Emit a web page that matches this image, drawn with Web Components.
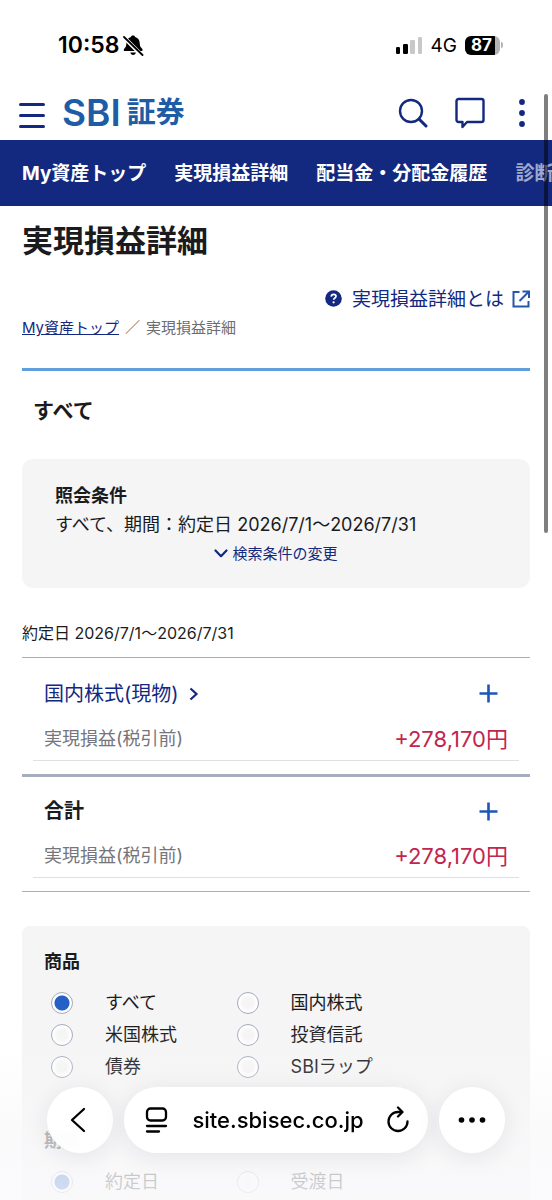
<!DOCTYPE html>
<html lang="ja">
<head>
<meta charset="utf-8">
<meta name="viewport" content="width=device-width, initial-scale=1">
<title>実現損益詳細</title>
<style>
  body {
    margin: 0;
    background: #fff;
    color: #1b1b1e;
    font-family: Inter, "Noto Sans CJK JP", sans-serif;
    --navy: #13297f;
    --rule: #a6adbf;
  }
</style>
</head>
<body>
<phone-screen>
  <status-bar slot="top"></status-bar>
  <site-header slot="top"></site-header>
  <site-nav slot="top"></site-nav>
  <page-intro></page-intro>
  <section-title>すべて</section-title>
  <condition-card>
    <span slot="title">照会条件</span>
    すべて、期間：約定日 2026/7/1〜2026/7/31
  </condition-card>
  <profit-list>
    <span slot="period">約定日 2026/7/1〜2026/7/31</span>
    <profit-row name="国内株式(現物)" amount="+278,170円" href="#stocks"></profit-row>
    <profit-row name="合計" amount="+278,170円" total></profit-row>
  </profit-list>
  <filter-card>
    <radio-set legend="商品" name="product" options="すべて,国内株式,米国株式,投資信託,債券,SBIラップ"></radio-set>
    <radio-set legend="期間" name="period" options="約定日,受渡日"></radio-set>
  </filter-card>
  <browser-bar slot="bottom"></browser-bar>
</phone-screen>

<script>
const define = (name, html, setup) => {
  const template = document.createElement('template');
  template.innerHTML = html;
  customElements.define(name, class extends HTMLElement {
    constructor() {
      super();
      this.attachShadow({ mode: 'open' }).append(template.content.cloneNode(true));
    }
    connectedCallback() {
      if (setup && !this.ready) { this.ready = true; setup(this, this.shadowRoot); }
    }
  });
};

define('phone-screen', `
  <style>
    :host { display: flex; flex-direction: column; height: 100vh; position: relative; overflow: hidden; }
    main { flex: 1; min-height: 0; overflow-y: auto; scrollbar-width: none; padding: 0 22px; }
    .fade { position: absolute; inset: auto 0 0; height: 180px; pointer-events: none;
      background: linear-gradient(rgba(249,249,251,0), rgba(248,248,250,.15) 28%, rgba(248,248,250,.7) 60%, rgba(250,250,252,.82)); }
    .thumb { position: absolute; right: 4px; top: 94px; width: 4px; height: 439px; border-radius: 2px; background: rgba(0,0,0,.5); }
    .bottom { position: absolute; inset: auto 0 47px; }
  </style>
  <slot name="top"></slot>
  <main><slot></slot></main>
  <div class="fade"></div>
  <div class="thumb"></div>
  <div class="bottom"><slot name="bottom"></slot></div>`);

define('status-bar', `
  <style>
    :host { display: flex; align-items: center; justify-content: space-between; height: 90px; padding: 0 49px 0 58px; color: #000; }
    div { display: flex; align-items: center; }
    .time { font-size: 23px; font-weight: 600; gap: 4px; }
    .net { font-size: 19px; gap: 8px; }
    svg { display: block; }
    .battery { display: flex; align-items: center; }
    .level { width: 35px; height: 19px; border-radius: 6px; font-size: 17px; font-weight: 700; line-height: 19px; color: #fff;
      justify-content: center; background: linear-gradient(90deg, #000 30px, #b4b4b4 30px); }
    .level span { padding-right: 2px; }
    .tip { width: 2px; height: 6px; margin-left: 1px; border-radius: 0 2px 2px 0; background: #b4b4b4; }
  </style>
  <div class="time"><span>10:58</span>
    <svg width="21" height="21" viewBox="0 0 21 21" aria-hidden="true">
      <path d="M10 .5c1.200 0 2 .7 2.200 1.600 3 .9 4.400 3.100 4.500 5.900.1 2.900.7 4 2 5.200.7.700.9 1.100.9 1.800 0 .7-.5 1.100-1.200 1.100H1.900c-.7 0-1.200-.4-1.200-1.100 0-.7.300-1.100.9-1.800C2.900 12 3.300 10.900 3.400 8c.1-2.800 1.500-5 4.400-5.900C8 1.200 8.800.5 10 .5zM7.300 17.500h5.600c-.3 1.500-1.300 2.500-2.800 2.500S7.600 19 7.300 17.500z"/>
      <path d="M.5 2 19 20.500" stroke="#fff" stroke-width="4"/>
      <path d="M1 2 19.500 20" stroke="#000" stroke-width="1.800" stroke-linecap="round"/>
    </svg>
  </div>
  <div class="net">
    <svg width="28" height="18" viewBox="0 0 28 18" aria-hidden="true">
      <rect x="1" y="11" width="4" height="7" rx="1.300"/><rect x="8" y="8" width="5" height="10" rx="1.300"/>
      <rect x="15" y="4" width="5" height="14" rx="1.300" fill="#c8c8c8"/><rect x="23" y="1" width="4" height="17" rx="1.300" fill="#c8c8c8"/>
    </svg>
    <span>4G</span>
    <div class="battery"><div class="level"><span>87</span></div><div class="tip"></div></div>
  </div>`);

define('site-header', `
  <style>
    :host { display: flex; align-items: center; height: 50px; padding: 0 26px 0 18px; color: var(--navy); }
    button { border: 0; padding: 0; background: none; color: inherit; display: flex; }
    .logo { display: flex; align-items: center; flex: 1; margin-left: 16px; gap: 6px; padding-bottom: 4px; color: #1f5ca6; text-decoration: none; line-height: 44px; }
    .latin { font-size: 37px; font-weight: 600; }
    .kanji { font-size: 29px; font-weight: 700; }
    nav { display: flex; align-items: center; gap: 27px; padding-bottom: 4px; }
  </style>
  <button aria-label="メニュー"><svg width="28" height="28" viewBox="0 0 28 28" fill="none" stroke="currentColor" stroke-width="3" stroke-linecap="round"><path d="M2.500 3.500h23M2.500 14.500h23M2.500 25.500h23"/></svg></button>
  <a class="logo" href="#top"><span class="latin">SBI</span><span class="kanji">証券</span></a>
  <nav>
    <button aria-label="検索"><svg width="30" height="30" viewBox="0 0 30 30" fill="none" stroke="currentColor" stroke-width="2.400" stroke-linecap="round"><circle cx="13" cy="13" r="11"/><path d="M21 21l7 7" stroke-width="3"/></svg></button>
    <button aria-label="メッセージ"><svg width="30" height="32" viewBox="0 0 30 32" fill="none" stroke="currentColor" stroke-width="2.400" stroke-linejoin="round"><path d="M3.500 2h23a2 2 0 0 1 2 2v19a2 2 0 0 1-2 2H12L7.500 30V25h-4a2 2 0 0 1-2-2V4a2 2 0 0 1 2-2z"/></svg></button>
    <button aria-label="その他"><svg width="14" height="28" viewBox="0 0 14 28" fill="currentColor"><circle cx="10" cy="3" r="2.900"/><circle cx="10" cy="14" r="2.900"/><circle cx="10" cy="25" r="2.900"/></svg></button>
  </nav>`);

define('site-nav', `
  <style>
    :host { display: block; background: var(--navy); overflow: hidden; }
    nav { display: flex; gap: 28px; padding: 2px 22px 0; line-height: 64px; font-size: 19px; font-weight: 700; white-space: nowrap; }
    a { color: #fff; text-decoration: none; }
    .next { opacity: .6; }
  </style>
  <nav><a href="#top">My資産トップ</a><a href="#realized">実現損益詳細</a><a href="#dividend">配当金・分配金履歴</a><a class="next" href="#check">診断</a></nav>`);

define('page-intro', `
  <style>
    :host { display: block; padding-top: 13px; border-bottom: 3px solid #609fdc; }
    h1 { margin: 0; font-size: 31px; line-height: 44px; font-weight: 700; }
    a { color: var(--navy); }
    .help { display: flex; justify-content: flex-end; align-items: center; gap: 8px; margin-top: 20px; font-size: 19px; line-height: 28px; text-decoration: none; }
    .help span { padding-top: 3px; }
    nav { display: flex; gap: 6px; margin: 3px 0 29px; font-size: 15px; line-height: 22px; color: #6c6c72; }
    .help svg:first-child { margin-right: 2px; }
  </style>
  <h1>実現損益詳細</h1>
  <a class="help" href="#help">
    <svg width="17" height="17" viewBox="0 0 17 17" fill="none" aria-hidden="true"><circle cx="8.500" cy="8.500" r="8.300" fill="#13297f"/><path d="M6.200 6.600c.1-1.500 1.100-2.300 2.400-2.300 1.400 0 2.400.8 2.400 2 0 1.700-2.300 1.700-2.300 3.500" stroke="#fff" stroke-width="1.700"/><circle cx="8.600" cy="12.300" r="1.100" fill="#fff"/></svg>
    <span>実現損益詳細とは</span>
    <svg width="18" height="18" viewBox="0 0 18 18" fill="none" stroke="#2458a8" stroke-width="2" aria-hidden="true"><path d="M7.500 2H1.500v14.500h15V11M10.500 1.500h6.500V8M16.500 2 7.500 11"/></svg>
  </a>
  <nav aria-label="パンくず"><a href="#top">My資産トップ</a><span>／</span><span>実現損益詳細</span></nav>`);

define('section-title', `
  <style>
    :host { display: block; padding: 25px 11px 33px; }
    h2 { margin: 0; font-size: 21px; line-height: 30px; font-weight: 700; }
  </style>
  <h2><slot></slot></h2>`);

define('condition-card', `
  <style>
    :host { display: block; padding: 22px 33px 20px; border-radius: 11px; background: #f5f5f5; }
    h3, p { margin: 0; font-size: 18px; line-height: 29px; }
    button { display: flex; align-items: center; justify-content: center; gap: 4px; width: 100%; border: 0; padding: 0; background: none;
      font: inherit; font-size: 15px; line-height: 29px; color: var(--navy); }
  </style>
  <h3><slot name="title"></slot></h3>
  <p><slot></slot></p>
  <button><svg width="14" height="9" viewBox="0 0 14 9" fill="none" stroke="currentColor" stroke-width="2.200" stroke-linecap="round" stroke-linejoin="round"><path d="M1.500 1.500 7 7.200l5.500-5.700"/></svg><span>検索条件の変更</span></button>`);

define('profit-list', `
  <style>
    :host { display: block; padding-top: 34px; }
    .period { font-size: 16px; line-height: 22px; margin-bottom: 13px; }
    .rows { border-top: 1px solid var(--rule); border-bottom: 1px solid var(--rule); }
  </style>
  <div class="period"><slot name="period"></slot></div>
  <div class="rows"><slot></slot></div>`);

define('profit-row', `
  <style>
    :host { display: block; padding: 0 11px 13px; }
    :host([total]) { border-top: 3px solid var(--rule); }
    .box { padding: 19px 11px 7px; border-bottom: 1px solid #dfe0e3; }
    .line { display: flex; justify-content: space-between; align-items: center; }
    .name { font-size: 20px; line-height: 30px; }
    .name a { display: flex; align-items: center; gap: 10px; padding-top: 2px; color: var(--navy); text-decoration: none; }
    strong { font-weight: 700; }
    button { display: flex; align-items: center; justify-content: center; width: 40px; height: 30px; border: 0; padding: 0; background: none; color: #1c56b8; }
    .detail { margin-top: 16px; font-size: 18px; line-height: 28px; color: #75757b; }
    .amount { font-size: 22px; color: #c0264f; }
  </style>
  <div class="box">
    <div class="line"><div class="name"></div>
      <button aria-label="開く"><svg width="19" height="19" viewBox="0 0 19 19" stroke="currentColor" stroke-width="2.600"><path d="M9.500.5v18M.5 9.500h18"/></svg></button></div>
    <div class="line detail"><span>実現損益(税引前)</span><span class="amount"></span></div>
  </div>`, (host, root) => {
  const name = root.querySelector('.name');
  const label = document.createElement(host.hasAttribute('total') ? 'strong' : 'a');
  label.textContent = host.getAttribute('name');
  if (!host.hasAttribute('total')) {
    label.href = host.getAttribute('href');
    label.insertAdjacentHTML('beforeend', '<svg width="10" height="14" viewBox="0 0 10 14" fill="none" stroke="currentColor" stroke-width="2.200"><path d="M1.500 1.500 7.500 7l-6 5.500"/></svg>');
  }
  name.append(label);
  root.querySelector('.amount').textContent = host.getAttribute('amount');
});

define('filter-card', `
  <style>
    :host { display: flex; flex-direction: column; gap: 45px; margin-top: 34px; padding: 23px 22px 60px; border-radius: 8px; background: #f5f5f5; }
  </style>
  <slot></slot>`);

define('radio-set', `
  <style>
    :host { display: block; font-size: 18px; }
    fieldset { margin: 0; padding: 0; border: 0; min-width: 0; }
    legend { padding: 0; margin-bottom: 12px; line-height: 26px; font-weight: 700; }
    .grid { display: grid; grid-template-columns: 2fr 2fr 1fr; }
    label { display: flex; align-items: center; gap: 32px; padding-left: 7px; line-height: 32px; white-space: nowrap; }
    label:nth-child(odd) { grid-column: 1; }
    input { appearance: none; box-sizing: border-box; flex: none; width: 22px; height: 22px; margin: 0; border: 1px solid #a3aabd; border-radius: 50%; background: radial-gradient(#f5f5f5 35%, #fff 65%); }
    input:checked { background: radial-gradient(circle, #2460c6 7px, #fff 8px); }
  </style>
  <fieldset><legend></legend><div class="grid"></div></fieldset>`, (host, root) => {
  root.querySelector('legend').textContent = host.getAttribute('legend');
  const grid = root.querySelector('.grid');
  host.getAttribute('options').split(',').forEach((text, i) => {
    const label = document.createElement('label');
    const input = document.createElement('input');
    input.type = 'radio';
    input.name = host.getAttribute('name');
    input.value = text;
    input.checked = i === 0;
    const caption = document.createElement('span');
    caption.textContent = text;
    label.append(input, caption);
    grid.append(label);
  });
});

define('browser-bar', `
  <style>
    :host { display: flex; gap: 11px; padding: 0 47px; color: #000; }
    .round, .pill { display: flex; align-items: center; justify-content: center; box-sizing: border-box; height: 66px; border: 0; border-radius: 33px;
      color: inherit; background: rgba(255,255,255,.95); backdrop-filter: blur(2px); box-shadow: 0 4px 24px rgba(30,30,60,.09); }
    .round { width: 66px; padding: 0; }
    .pill { flex: 1; justify-content: space-between; padding: 0 18px 0 20px; }
    .pill button { display: flex; border: 0; padding: 0; background: none; color: inherit; }
    .url { font-size: 22px; font-weight: 500; line-height: 30px; color: inherit; text-decoration: none; }
    svg { fill: none; stroke: currentColor; stroke-width: 2.300; stroke-linecap: round; stroke-linejoin: round; }
  </style>
  <button class="round" aria-label="戻る"><svg width="20" height="28" viewBox="0 0 20 28"><path d="M14 3 2 14l12 11"/></svg></button>
  <div class="pill">
    <button aria-label="ページ設定"><svg width="26" height="28" viewBox="0 0 26 28"><rect x="3" y="2.500" width="19" height="12" rx="3.500"/><path d="M3 20h19M3 25.500h12"/></svg></button>
    <a class="url" href="#top">site.sbisec.co.jp</a>
    <button aria-label="再読み込み"><svg width="24" height="28" viewBox="0 0 24 28"><path d="M21.500 15.500a9.500 9.500 0 1 1-9.500-9.500h4M12 1.500 16.500 6 12 10.500"/></svg></button>
  </div>
  <button class="round" aria-label="メニュー"><svg width="28" height="8" viewBox="0 0 28 8"><g fill="currentColor" stroke="none"><circle cx="3.500" cy="4" r="2.800"/><circle cx="14" cy="4" r="2.800"/><circle cx="24.500" cy="4" r="2.800"/></g></svg></button>`);
</script>
</body>
</html>
